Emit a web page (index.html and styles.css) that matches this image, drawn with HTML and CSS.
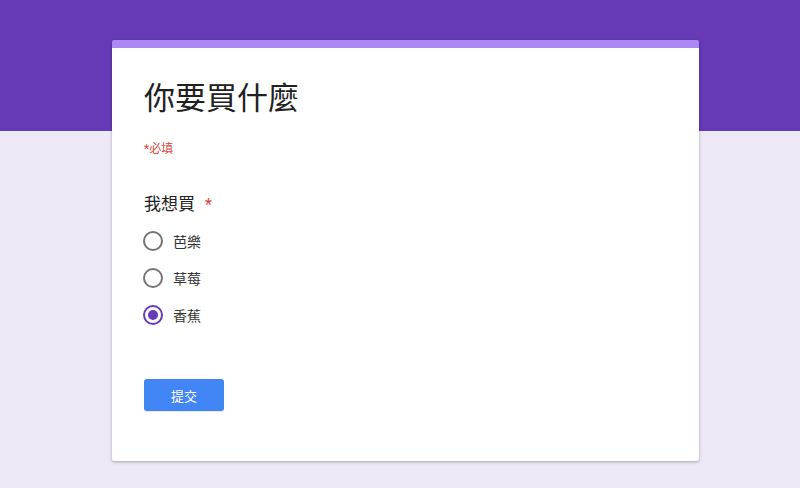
FILE: index.html
```html
<!DOCTYPE html>
<html lang="zh-Hant">
    <head>
        <meta charset="UTF-8" />
        <meta name="viewport" content="width=device-width, initial-scale=1.0" />
        <title>你要買什麼</title>
        <link rel="stylesheet" href="styles.css">
    </head>

    <body>
        <!-- 表單卡片 -->
        <form class="card">
            <h1 class="title">你要買什麼</h1>
            <p class="required-note">*必填</p>

            <div class="question">
                <div class="question-title">我想買<span class="star">*</span></div>
                <label class="option">
                    <input type="radio" name="fruit" value="芭樂" />
                    <span class="dot"></span>
                    <span class="label">芭樂</span>
                </label>
                <label class="option">
                    <input type="radio" name="fruit" value="草莓" />
                    <span class="dot"></span>
                    <span class="label">草莓</span>
                </label>
                <label class="option">
                    <input type="radio" name="fruit" value="香蕉" checked />
                    <span class="dot"></span>
                    <span class="label">香蕉</span>
                </label>
            </div>

            <button type="button" class="submit">提交</button>
        </form>
    </body>
</html>
```

FILE: styles.css
```css
* {
    margin: 0;
    padding: 0;
    box-sizing: border-box;
}
html,
body {
    height: 100%;
}
body {
    /* 上方紫色橫條 + 淡紫背景 */
    background: linear-gradient(#6639b6 0, #6639b6 131px, #ede7f6 131px);
    font-family: Roboto, "Noto Sans CJK TC", sans-serif;
    color: #212121;
    padding-top: 40px;
    overflow: hidden;
}
.card {
    width: 587px;
    margin-left: 112px;
    background: #fff;
    border-top: 8px solid #ab88f6;
    border-radius: 2px;
    box-shadow: 0 1px 3px rgba(0, 0, 0, 0.3);
    padding: 31px 32px 50px;
}
.title {
    font-size: 31px;
    font-weight: 400;
    line-height: 40px;
    color: #212121;
}
.required-note {
    margin-top: 22px;
    font-size: 12px;
    line-height: 16px;
    color: #d5493c;
}
.question {
    margin-top: 35px;
}
.question-title {
    font-size: 17px;
    line-height: 24px;
    color: #212121;
    margin-bottom: 5px;
}
.star {
    color: #db4437;
    margin-left: 10px;
    font-size: 16px;
}
.option {
    display: flex;
    align-items: center;
    height: 37px;
    cursor: pointer;
}
.option input {
    display: none;
}
.dot {
    width: 20px;
    height: 20px;
    border: 2px solid #757575;
    border-radius: 50%;
    margin-left: -1px;
    display: flex;
    align-items: center;
    justify-content: center;
}
.option input:checked + .dot {
    border-color: #673ab7;
}
.option input:checked + .dot::after {
    content: '';
    width: 10px;
    height: 10px;
    border-radius: 50%;
    background: #673ab7;
}
.label {
    margin-left: 10px;
    font-size: 14px;
    color: #333;
}
.submit {
    margin-top: 46px;
    width: 80px;
    height: 32px;
    border: none;
    border-radius: 3px;
    background: #4285f4;
    color: #fff;
    font-family: Roboto, "Noto Sans CJK TC", sans-serif;
    font-size: 13px;
    box-shadow: 0 1px 1px rgba(0, 0, 0, 0.1);
}
```
